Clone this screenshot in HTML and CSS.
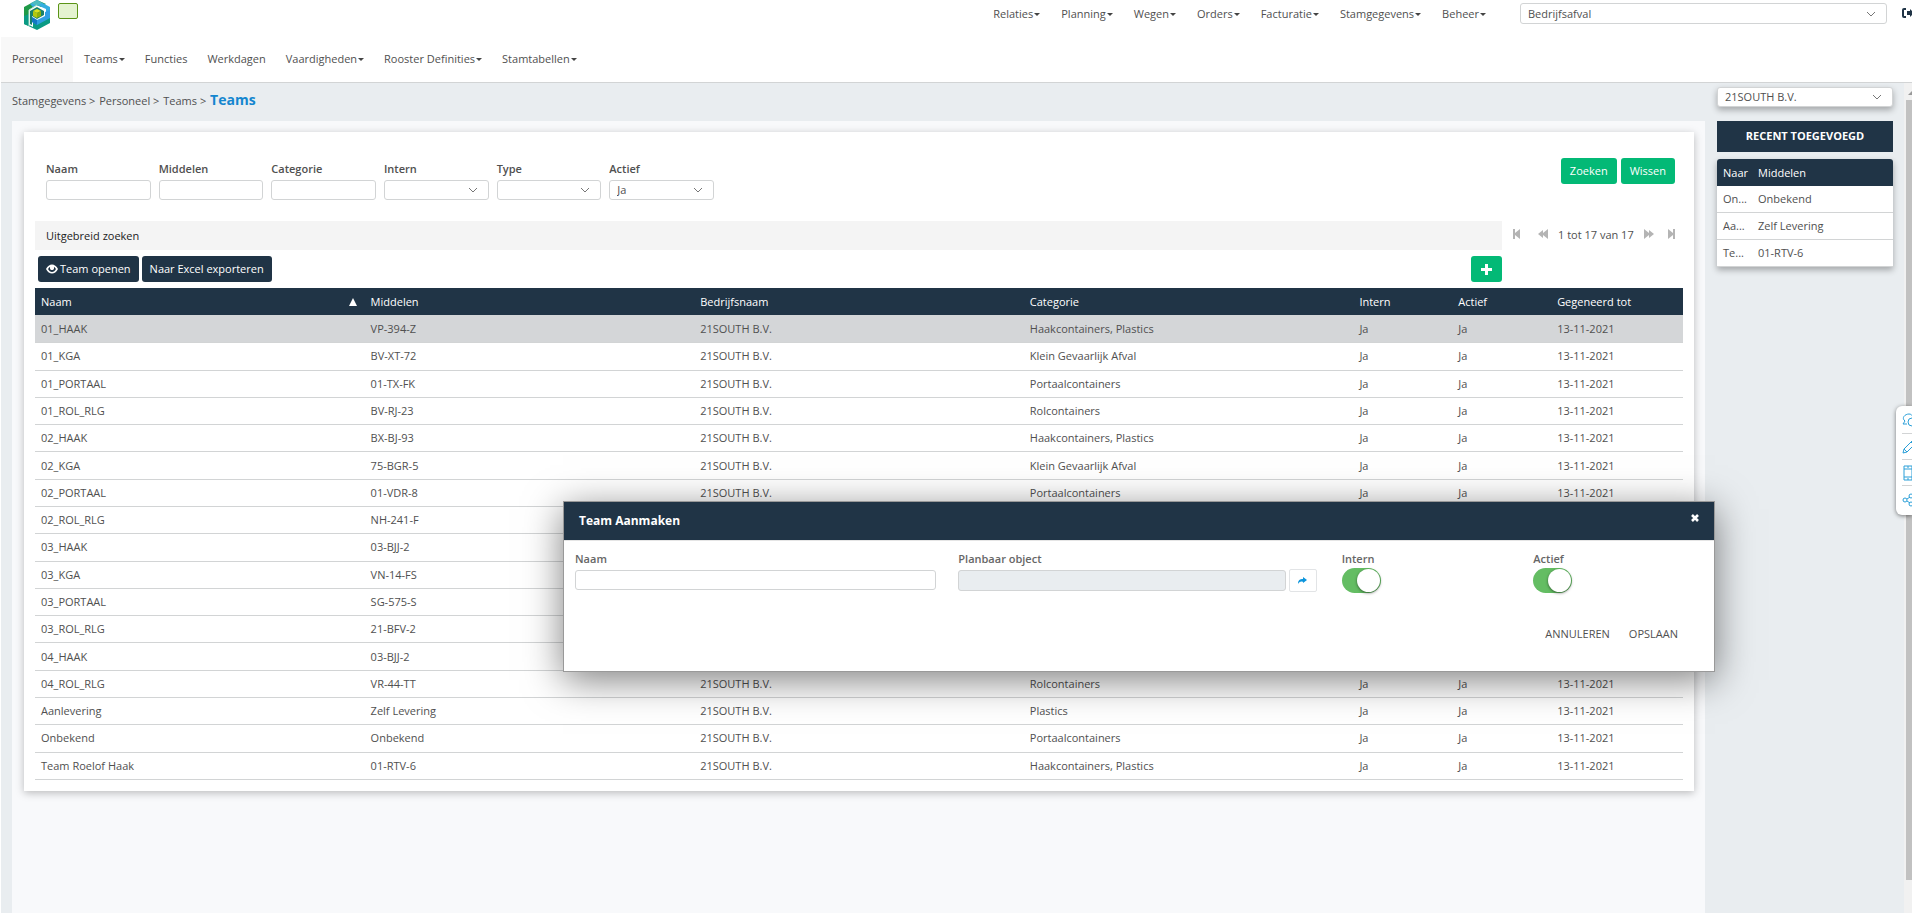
FILE: index.html
```html
<!DOCTYPE html>
<html lang="nl">
<head>
<meta charset="utf-8">
<title>Teams</title>
<link rel="stylesheet" href="styles.css">
</head>
<body>
<header class="header">
  <div class="topbar">
    <svg class="logo" viewBox="0 0 28 30" width="28" height="30" aria-hidden="true">
      <path d="M14 0 1 7v17l5 2V10l8-5 4 2 5-3z" fill="#1f9a48"/>
      <path d="M14 0l13 7v5l-4 2V9l-9-4-4 2-3-3z" fill="#35aee0"/>
      <path d="M1 16v8l13 6 13-7v-6l-13 7-4-2v5L6 25V14z" fill="#0a9a84"/>
      <path d="M14 0 8 3l6 3 5-3z" fill="#4fbcc0"/>
      <path d="M27 10v8l-13 7-5-3v-5l5 3 8-4v-4z" fill="#2f9ee2"/>
      <path d="M9 17l5 3v5l-5-3z" fill="#1477c4"/>
      <path d="M7 11l7-4 7 4v4l-7 4-5-3v9l-2-1z" fill="#17806c"/>
      <path d="M10 11l4-2 4 2-4 2z" fill="#dbe11c"/>
      <path d="M10 11l4 2v5l-4-2z" fill="#b5c80f"/>
      <path d="M18 11v5l-4 2v-5z" fill="#8fae0b"/>
      <path d="M6 26V10l8-5" fill="none" stroke="#bfe5d3"/>
    </svg>
    <span class="status-box"></span>
    <nav class="main-nav">
      <a href="#">Relaties<i class="caret"></i></a>
      <a href="#">Planning<i class="caret"></i></a>
      <a href="#">Wegen<i class="caret"></i></a>
      <a href="#">Orders<i class="caret"></i></a>
      <a href="#">Facturatie<i class="caret"></i></a>
      <a href="#">Stamgegevens<i class="caret"></i></a>
      <a href="#">Beheer<i class="caret"></i></a>
    </nav>
    <select class="field company" aria-label="Afdeling"><option>Bedrijfsafval</option></select>
    <button class="logout" type="button" aria-label="Uitloggen">
      <svg viewBox="0 0 14 12" width="14" height="12"><path d="M5 2H3a1 1 0 0 0-1 1v6a1 1 0 0 0 1 1h2" fill="none" stroke="#203446" stroke-width="2"/><path d="M6 4h3V2l4 4-4 4V8H6z" fill="#203446"/></svg>
    </button>
  </div>
  <nav class="sub-nav">
    <a href="#" class="active">Personeel</a>
    <a href="#">Teams<i class="caret"></i></a>
    <a href="#">Functies</a>
    <a href="#">Werkdagen</a>
    <a href="#">Vaardigheden<i class="caret"></i></a>
    <a href="#">Rooster Definities<i class="caret"></i></a>
    <a href="#">Stamtabellen<i class="caret"></i></a>
  </nav>
</header>

<div class="page">
  <main class="content">
    <div class="breadcrumb"><span>Stamgegevens &gt;</span> <span>Personeel &gt;</span> <span>Teams &gt;</span> <h1>Teams</h1></div>
    <div class="panel">
      <section class="card">
        <form class="filters">
          <div class="filter-fields">
            <div class="filter"><label for="f-naam">Naam</label><input class="field" id="f-naam" type="text"></div>
            <div class="filter"><label for="f-middelen">Middelen</label><input class="field" id="f-middelen" type="text"></div>
            <div class="filter"><label for="f-categorie">Categorie</label><input class="field" id="f-categorie" type="text"></div>
            <div class="filter"><label for="f-intern">Intern</label><select class="field" id="f-intern"><option></option></select></div>
            <div class="filter"><label for="f-type">Type</label><select class="field" id="f-type"><option></option></select></div>
            <div class="filter"><label for="f-actief">Actief</label><select class="field" id="f-actief"><option>Ja</option></select></div>
          </div>
          <div class="filter-actions">
            <button class="btn green" type="button">Zoeken</button>
            <button class="btn green" type="button">Wissen</button>
          </div>
        </form>
        <div class="list-head">
          <div class="list-tools">
            <div class="advanced">Uitgebreid zoeken</div>
            <div class="toolbar">
              <button class="btn dark" type="button"><svg viewBox="0 0 12 10" width="12" height="10"><path d="M0 5c3-6 9-6 12 0-3 6-9 6-12 0z" fill="#fff"/><path d="M2 5c1-1 1-2 2-2 0 4 4 4 4 0 1 0 1 1 2 2-2 4-6 4-8 0z" fill="#203446"/><circle cx="6" cy="4" r="2" fill="#fff"/></svg>Team openen</button>
              <button class="btn dark" type="button">Naar Excel exporteren</button>
              <button class="btn green add" type="button" aria-label="Toevoegen"><svg viewBox="0 0 11 11" width="11" height="11"><path d="M4 0h3v4h4v3H7v4H4V7H0V4h4z" fill="#fff"/></svg></button>
            </div>
          </div>
          <div class="pager">
            <button type="button" aria-label="Eerste"><svg viewBox="0 0 9 10" width="9" height="10"><path d="M0 0h2v4l5-4v10L2 6v4H0z"/></svg></button>
            <button type="button" aria-label="Vorige"><svg viewBox="0 0 11 10" width="11" height="10"><path d="M0 5l5-4v3l5-4v10L5 6v3z"/></svg></button>
            <span>1 tot 17 van 17</span>
            <button type="button" aria-label="Volgende"><svg viewBox="0 0 11 10" width="11" height="10"><path d="M11 5L6 1v3L1 0v10l5-4v3z"/></svg></button>
            <button type="button" aria-label="Laatste"><svg viewBox="0 0 9 10" width="9" height="10"><path d="M8 0H6v4L1 0v10l5-4v4h2z"/></svg></button>
          </div>
        </div>
        <table class="grid teams">
          <colgroup><col class="wide"><col class="wide"><col class="wide"><col class="wide"><col class="narrow"><col class="narrow"><col></colgroup>
          <thead><tr><th class="sorted">Naam<i class="sort-up"></i></th><th>Middelen</th><th>Bedrijfsnaam</th><th>Categorie</th><th>Intern</th><th>Actief</th><th>Gegeneerd tot</th></tr></thead>
          <tbody>
            <tr class="selected"><td>01_HAAK</td><td>VP-394-Z</td><td>21SOUTH B.V.</td><td>Haakcontainers, Plastics</td><td>Ja</td><td>Ja</td><td>13-11-2021</td></tr>
            <tr><td>01_KGA</td><td>BV-XT-72</td><td>21SOUTH B.V.</td><td>Klein Gevaarlijk Afval</td><td>Ja</td><td>Ja</td><td>13-11-2021</td></tr>
            <tr><td>01_PORTAAL</td><td>01-TX-FK</td><td>21SOUTH B.V.</td><td>Portaalcontainers</td><td>Ja</td><td>Ja</td><td>13-11-2021</td></tr>
            <tr><td>01_ROL_RLG</td><td>BV-RJ-23</td><td>21SOUTH B.V.</td><td>Rolcontainers</td><td>Ja</td><td>Ja</td><td>13-11-2021</td></tr>
            <tr><td>02_HAAK</td><td>BX-BJ-93</td><td>21SOUTH B.V.</td><td>Haakcontainers, Plastics</td><td>Ja</td><td>Ja</td><td>13-11-2021</td></tr>
            <tr><td>02_KGA</td><td>75-BGR-5</td><td>21SOUTH B.V.</td><td>Klein Gevaarlijk Afval</td><td>Ja</td><td>Ja</td><td>13-11-2021</td></tr>
            <tr><td>02_PORTAAL</td><td>01-VDR-8</td><td>21SOUTH B.V.</td><td>Portaalcontainers</td><td>Ja</td><td>Ja</td><td>13-11-2021</td></tr>
            <tr><td>02_ROL_RLG</td><td>NH-241-F</td><td></td><td></td><td></td><td></td><td></td></tr>
            <tr><td>03_HAAK</td><td>03-BJJ-2</td><td></td><td></td><td></td><td></td><td></td></tr>
            <tr><td>03_KGA</td><td>VN-14-FS</td><td></td><td></td><td></td><td></td><td></td></tr>
            <tr><td>03_PORTAAL</td><td>SG-575-S</td><td></td><td></td><td></td><td></td><td></td></tr>
            <tr><td>03_ROL_RLG</td><td>21-BFV-2</td><td></td><td></td><td></td><td></td><td></td></tr>
            <tr><td>04_HAAK</td><td>03-BJJ-2</td><td></td><td></td><td></td><td></td><td></td></tr>
            <tr><td>04_ROL_RLG</td><td>VR-44-TT</td><td>21SOUTH B.V.</td><td>Rolcontainers</td><td>Ja</td><td>Ja</td><td>13-11-2021</td></tr>
            <tr><td>Aanlevering</td><td>Zelf Levering</td><td>21SOUTH B.V.</td><td>Plastics</td><td>Ja</td><td>Ja</td><td>13-11-2021</td></tr>
            <tr><td>Onbekend</td><td>Onbekend</td><td>21SOUTH B.V.</td><td>Portaalcontainers</td><td>Ja</td><td>Ja</td><td>13-11-2021</td></tr>
            <tr><td>Team Roelof Haak</td><td>01-RTV-6</td><td>21SOUTH B.V.</td><td>Haakcontainers, Plastics</td><td>Ja</td><td>Ja</td><td>13-11-2021</td></tr>
          </tbody>
        </table>
      </section>
    </div>
  </main>
  <aside class="sidebar">
    <select class="field raised" aria-label="Bedrijf"><option>21SOUTH B.V.</option></select>
    <h2>RECENT TOEGEVOEGD</h2>
    <table class="grid recent">
      <colgroup><col class="short"><col></colgroup>
      <thead><tr><th>Naar</th><th>Middelen</th></tr></thead>
      <tbody>
        <tr><td>On...</td><td>Onbekend</td></tr>
        <tr><td>Aa...</td><td>Zelf Levering</td></tr>
        <tr><td>Te...</td><td>01-RTV-6</td></tr>
      </tbody>
    </table>
  </aside>
  <div class="scrollbar"><i class="scroll-up"></i><i class="scroll-thumb"></i></div>
</div>

<div class="side-tools">
  <button type="button" aria-label="Chat"><svg viewBox="0 0 18 16" width="18" height="16"><path d="M5 11H1l2-3C-1 5 3 1 7 1c2 0 3 1 4 3"/><circle cx="10" cy="9" r="4"/></svg></button>
  <button type="button" aria-label="Bewerken"><svg viewBox="0 0 18 16" width="18" height="16"><path d="M1 14l1-4 9-9 3 3-9 9zM2 10l3 3M9 3l3 3"/></svg></button>
  <button type="button" aria-label="Mobiel"><svg viewBox="0 0 18 16" width="18" height="16"><path d="M2 1h8v14H2zM2 4h8M2 12h8M5 2h2M5 14h2"/></svg></button>
  <button type="button" aria-label="Delen"><svg viewBox="0 0 18 16" width="18" height="16"><circle cx="3" cy="8" r="2"/><circle cx="9" cy="4" r="2"/><circle cx="9" cy="12" r="2"/><path d="M5 7l3-2M5 9l3 2"/></svg></button>
</div>

<div class="modal" role="dialog" aria-labelledby="modal-title">
  <div class="modal-head">
    <h2 id="modal-title">Team Aanmaken</h2>
    <button type="button" aria-label="Sluiten"><svg viewBox="0 0 8 8" width="8" height="8"><path d="M1 1l6 6M7 1L1 7" stroke="#fff" stroke-width="2.6"/></svg></button>
  </div>
  <form class="modal-body">
    <div class="cell"><label for="m-naam">Naam</label><input class="field" id="m-naam" type="text"></div>
    <div class="cell"><label for="m-object">Planbaar object</label>
      <div class="lookup">
        <input class="field" id="m-object" type="text" disabled>
        <button type="button" aria-label="Kiezen"><svg viewBox="0 0 9 7" width="9" height="7"><path d="M5 0l4 3-4 3V5C3 4 1 5 0 7c0-4 2-5 5-5z" fill="#0d95dc"/></svg></button>
      </div>
    </div>
    <div class="cell"><label for="m-intern">Intern</label><input class="toggle" id="m-intern" type="checkbox" checked></div>
    <div class="cell"><label for="m-actief">Actief</label><input class="toggle" id="m-actief" type="checkbox" checked></div>
  </form>
  <div class="modal-foot">
    <button type="button">ANNULEREN</button>
    <button type="button">OPSLAAN</button>
  </div>
</div>
</body>
</html>
```

FILE: styles.css
```css
* { box-sizing: border-box; }

body {
  margin: 0;
  height: 100vh;
  display: flex;
  flex-direction: column;
  overflow: hidden;
  border-left: 1px solid #fff;
  background: #fff;
  color: #505050;
  font: 11px/15px "Open Sans", sans-serif;
}

button, input, select { font: inherit; color: inherit; }
button { border: 0; padding: 0; background: none; cursor: pointer; }
a { color: inherit; text-decoration: none; }
h1, h2 { margin: 0; }

.field {
  width: 100%;
  height: 20px;
  padding: 0 7px 1px;
  border: 1px solid #d2d4d5;
  border-radius: 3px;
  background-color: #fff;
}
.field:disabled { background-color: #e9edf0; height: 21px; }
select.field {
  appearance: none;
  background-image: url("data:image/svg+xml,%3Csvg xmlns='http://www.w3.org/2000/svg' width='10' height='6'%3E%3Cpath d='M1 1l4 4 4-4' fill='none' stroke='%23777'/%3E%3C/svg%3E");
  background-repeat: no-repeat;
  background-position: right 10px center;
}

/* Header */
.header { border-bottom: 1px solid #d2d4d5; }
.topbar { display: flex; align-items: flex-start; height: 37px; padding-left: 22px; }
.logo { flex: none; }
.status-box {
  width: 20px;
  height: 16px;
  margin: 3px auto 0 7px;
  border: 1px solid #5b9417;
  border-radius: 2px;
  background: #e4f3d0;
}
.main-nav, .sub-nav { display: flex; }
.main-nav a { padding: 6px 10px 6px 11px; }
.company { width: 367px; height: 21px; margin: 3px 14px 0 24px; }
.logout { width: 11px; height: 12px; margin-top: 7px; overflow: hidden; text-align: left; }
.logout svg { display: block; }
.caret {
  display: inline-block;
  margin-left: 1px;
  vertical-align: 2px;
  border: 3px solid transparent;
  border-top: 3px solid #444;
  border-bottom: 0;
}
.sub-nav a { padding: 14px 9px 16px 11px; }
.sub-nav .active { padding-right: 10px; background: #f8f8f8; }

/* Page body */
.page { flex: 1; min-height: 0; display: flex; background: #e9edf0; }
.content { flex: 1; display: flex; flex-direction: column; padding-left: 11px; }
.breadcrumb { padding: 7px 0 10px; line-height: 20px; }
.breadcrumb span { margin-right: 1px; }
.breadcrumb h1 { display: inline; font-size: 14px; font-weight: 700; color: #1486cf; }
.panel { flex: 1; padding: 11px 11px 0 12px; background: #f8f9fb; }
.card {
  padding: 22px 11px 11px;
  background: #fff;
  box-shadow: 0 2px 8px rgba(0, 0, 0, .25);
}

.filters { display: flex; justify-content: space-between; padding: 0 8px 0 11px; margin-bottom: 21px; }
.filter-fields { display: grid; grid-template-columns: repeat(6, 1fr); gap: 8px; width: 668px; }
.filter label { display: block; margin: 7px 0 4px; font-weight: 600; }
.filter-actions { display: flex; gap: 4px; margin: 4px 0 0; }
.btn {
  display: flex;
  align-items: center;
  justify-content: center;
  height: 26px;
  padding: 0 9px 1px;
  border-radius: 3px;
  color: #fff;
}
.btn.green { background: #03b976; }
.btn.dark { gap: 2px; padding: 0 8px 1px; background: #203446; }
.btn.add { width: 31px; margin-left: auto; padding: 0; }

.list-head { display: flex; gap: 11px; }
.list-tools { flex: 1; }
.advanced { padding: 7px 11px; background: #f4f4f4; color: #222; }
.toolbar { display: flex; gap: 3px; padding: 6px 0 6px 3px; }
.pager { display: flex; align-items: center; gap: 9px; height: 26px; width: 170px; }
.pager button { display: flex; }
.pager button:first-child { margin-right: 7px; }
.pager button:last-child { margin-left: 4px; }
.pager span { white-space: nowrap; }
.pager svg { fill: #b4b4b4; }

.grid { width: 100%; table-layout: fixed; border-collapse: separate; border-spacing: 0; }
.grid th, .grid td {
  height: 27px;
  padding: 0 6px 1px;
  text-align: left;
  font-weight: 400;
  white-space: nowrap;
}
.grid th { background: #203446; color: #fff; }
.grid td { border-bottom: 1px solid #d2d4d5; }
.grid .wide { width: 20%; }
.grid .narrow { width: 6%; }
.teams { height: 492px; }
.teams .selected { height: 28px; background: #d4d6d8; }
.sort-up {
  float: right;
  margin: 4px 2px 0 0;
  border: 4px solid transparent;
  border-top: 0;
  border-bottom: 8px solid #fff;
}

/* Right column */
.sidebar { width: 176px; margin: 4px 11px 0 12px; }
.raised { display: block; margin-bottom: 14px; box-shadow: 0 3px 6px rgba(0, 0, 0, .3); }
.sidebar h2 {
  margin-bottom: 7px;
  padding: 7px 0 9px;
  background: #203446;
  color: #fff;
  font-size: 11px;
  font-weight: 700;
  text-align: center;
}
.recent { border-radius: 3px 3px 0 0; overflow: hidden; background: #fff; box-shadow: 0 3px 6px rgba(0, 0, 0, .3); }
.recent .short { width: 35px; }
.scrollbar { width: 8px; padding-left: 2px; background: #f1f1f1; overflow: hidden; }
.scroll-up { display: block; width: 0; margin: 8px 0 5px 2px; border: 4px solid transparent; border-top: 0; border-bottom: 4px solid #999; }
.scroll-thumb { display: block; height: 94%; background: #c1c1c1; }

/* Floating tools on the window edge */
.side-tools {
  position: absolute;
  right: 0;
  top: 406px;
  width: 16px;
  padding: 2px 0 3px 6px;
  overflow: hidden;
  border-radius: 6px 0 0 6px;
  background: #fff;
  box-shadow: 0 1px 4px rgba(0, 0, 0, .5);
}
.side-tools button { display: block; width: 18px; height: 26px; padding: 5px 0 4px; border-bottom: 1px solid #d2d4d5; }
.side-tools button:last-child { border-bottom: 0; }
.side-tools svg { display: block; fill: none; stroke: #2a9fd8; }

/* Dialog */
.modal {
  position: absolute;
  top: 501px;
  left: 563px;
  width: 1152px;
  border: 1px solid #999;
  background: #fff;
  box-shadow: 0 8px 36px rgba(0, 0, 0, .5);
}
.modal-head {
  display: flex;
  justify-content: space-between;
  padding: 11px 15px 12px;
  background: #203446;
  border-bottom: 1px solid #e5e5e5;
  color: #fff;
}
.modal-head h2 { font-size: 12px; font-weight: 700; }
.modal-head button { display: flex; margin-top: 1px; }
.modal-body { display: grid; grid-template-columns: 4fr 4fr 2fr 2fr; padding-top: 10px; }
.cell { padding: 0 11px; }
.cell label { display: block; margin-bottom: 4px; font-weight: 600; color: #666; }
.lookup { display: flex; gap: 3px; padding-right: 3px; }
.lookup button {
  flex: none;
  width: 28px;
  height: 23px;
  margin-top: -1px;
  border: 1px solid #e2e4e6;
  border-radius: 2px;
}
.lookup svg { display: block; margin: auto; }
.toggle {
  appearance: none;
  display: block;
  width: 39px;
  height: 25px;
  margin: -2px 0 0;
  padding: 1px;
  border-radius: 13px;
  background: #64bd63;
}
.toggle::before {
  content: "";
  display: block;
  width: 23px;
  height: 23px;
  margin-left: auto;
  border-radius: 50%;
  background: #fff;
  box-shadow: 0 1px 3px rgba(0, 0, 0, .5);
}
.modal-foot { display: flex; justify-content: flex-end; gap: 19px; padding: 33px 36px 30px; }
```
